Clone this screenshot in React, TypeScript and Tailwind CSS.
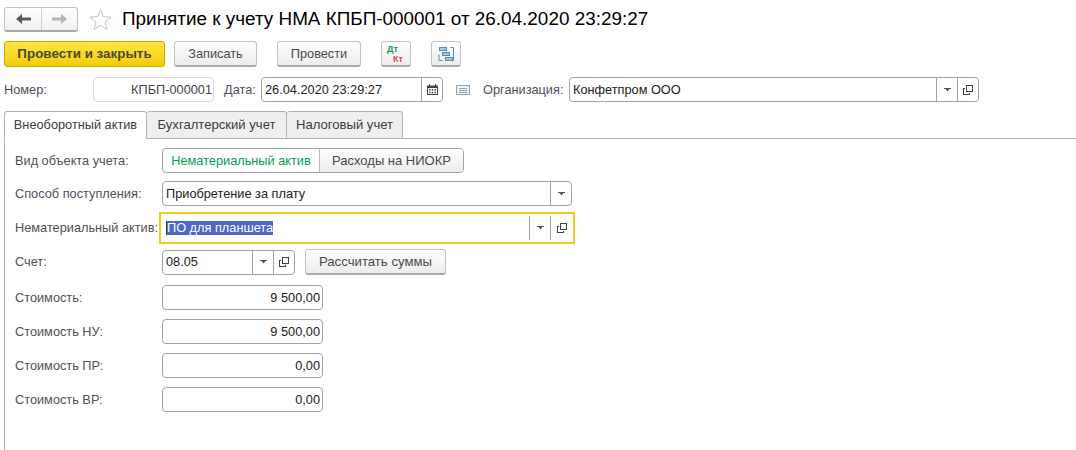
import type { ReactNode } from "react";

function DropArrow() {
  return (
    <svg width="7" height="4" viewBox="0 0 7 4" className="text-[#555]">
      <path d="M0 0h7v1H5.5L3.5 3.5 1.5 1H0z" fill="currentColor" />
    </svg>
  );
}

function OpenIcon() {
  return (
    <svg width="10" height="10" viewBox="0 0 10 10" fill="none" stroke="#444" strokeWidth="1" shapeRendering="crispEdges">
      <rect x="3.5" y="0.5" width="6" height="6" />
      <path d="M2 3.5H0.5V9.5H6V8" />
    </svg>
  );
}

function Field({ className = "", children, right = false }: { className?: string; children?: ReactNode; right?: boolean }) {
  return (
    <div
      className={`flex h-[25px] items-center rounded-[4px] border border-[#a3a3a3] bg-white text-[#222] ${right ? "justify-end pr-[2px]" : "pl-[3px]"} ${className}`}
    >
      {children}
    </div>
  );
}

function FieldBtn({ children, w = "w-[21px]" }: { children: ReactNode; w?: string }) {
  return <div className={`flex h-full shrink-0 items-center justify-center border-l border-[#a3a3a3] ${w}`}>{children}</div>;
}

function Btn({ className = "", children }: { className?: string; children: ReactNode }) {
  return (
    <div
      className={`flex h-[26px] items-center justify-center rounded-[3px] border border-b-2 border-[#c4c4c4] border-b-[#aaa] bg-gradient-to-b from-white to-[#ececec] text-[#4a4a4a] ${className}`}
    >
      {children}
    </div>
  );
}

function Row({ label, top, children }: { label: string; top: string; children: ReactNode }) {
  return (
    <div className={`flex items-center ${top}`}>
      <div className="w-[147px] shrink-0 whitespace-nowrap text-[#50505a]">{label}</div>
      {children}
    </div>
  );
}

function Tab({ active = false, className = "", children }: { active?: boolean; className?: string; children: ReactNode }) {
  return (
    <div
      className={`flex h-[28px] items-center rounded-t-[3px] border border-[#b4b4b4] text-[#3c3c3c] ${active ? "border-b-white bg-white" : "bg-[#efefef]"} ${className}`}
    >
      {children}
    </div>
  );
}

export default function App() {
  return (
    <div className="h-[450px] overflow-hidden bg-white pl-1 pt-[7px] text-[12.75px] leading-[14px] [font-family:'Liberation_Sans',Arial,sans-serif]">
      {/* title row */}
      <div className="flex h-[25px] items-center">
        <div className="flex h-[25px] w-[74px] items-center rounded-[3px] border border-b-2 border-[#c4c4c4] border-b-[#aaa] bg-gradient-to-b from-white to-[#f0f0f0]">
          <div className="flex h-full w-[37px] items-center justify-center border-r border-[#d0d0d0]">
            <svg width="15" height="10" viewBox="0 0 15 10">
              <path d="M0 5 6 0v3.5h9v3H6V10z" fill="#5a5a5a" />
            </svg>
          </div>
          <div className="flex h-full flex-1 items-center justify-center">
            <svg width="15" height="10" viewBox="0 0 15 10">
              <path d="M15 5 9 0v3.5H0v3h9V10z" fill="#b4b4b4" />
            </svg>
          </div>
        </div>
        <svg width="23" height="23" viewBox="0 0 23 23" fill="none" stroke="#c4c4c4" className="ml-[11px]">
          <path d="M11.5 1.5 14.3 8.7 22 9.1 16 14 18 21.5 11.5 17.3 5 21.5 7 14 1 9.1 8.7 8.7z" />
        </svg>
        <h1 className="mb-[2px] ml-[10px] whitespace-nowrap text-[18.9px] font-normal text-black">Принятие к учету НМА КПБП-000001 от 26.04.2020 23:29:27</h1>
      </div>

      {/* command bar */}
      <div className="mt-[9px] flex items-center">
        <div className="flex h-[26px] w-[161px] items-center justify-center rounded-[3px] border border-[#c9a800] bg-gradient-to-b from-[#ffe640] to-[#f3cd00] text-[13.4px] font-bold text-[#4f4a2a]">
          Провести и закрыть
        </div>
        <Btn className="ml-[9px] w-[83px]">Записать</Btn>
        <Btn className="ml-[20px] w-[84px]">Провести</Btn>
        <Btn className="ml-[20px] w-[30px]">
          <div className="relative h-[20px] w-[20px] text-[9px] font-bold leading-[10px]">
            <span className="absolute left-[1px] top-0 text-[#0a9a50]">Дт</span>
            <span className="absolute left-[7px] top-[10px] text-[#e8474a]">Кт</span>
          </div>
        </Btn>
        <Btn className="ml-[20px] w-[30px]">
          <svg width="16" height="16" viewBox="0 0 16 16" fill="#a9c6dd" stroke="#5a8db5">
            <path d="M12.5 1.5h3v13h-3M4.5 14.5h-3.5v-6" fill="none" />
            <rect x="1.5" y="1.5" width="7" height="3" />
            <rect x="4.5" y="6.5" width="7" height="3" />
            <rect x="7.5" y="11.5" width="7" height="3" />
          </svg>
        </Btn>
      </div>

      {/* number row */}
      <div className="mt-[10px] flex items-center">
        <div className="w-[89px] shrink-0 text-[#50505a]">Номер:</div>
        <Field className="w-[121px] justify-end !pr-[1px] border-[#dcdcdc] text-[#444]">КПБП-000001</Field>
        <div className="ml-[10px] w-[37px] text-[#50505a]">Дата:</div>
        <Field className="w-[182px] justify-between">
          <span>26.04.2020 23:29:27</span>
          <FieldBtn>
            <svg width="11" height="11" viewBox="0 0 11 11" fill="#444">
              <path d="M0 1.5h2V0h1v1.5h5V0h1v1.5h2V11H0zM1 4v6h9V4z" />
              <path d="M2 5h1.5v1.5H2zM4.7 5h1.5v1.5H4.7zM7.5 5H9v1.5H7.5zM2 7.8h1.5v1.5H2zM4.7 7.8h1.5v1.5H4.7zM7.5 7.8H9v1.5H7.5z" />
            </svg>
          </FieldBtn>
        </Field>
        <svg width="14" height="10" viewBox="0 0 14 10" fill="none" stroke="#8fa3b5" className="ml-[13px]" shapeRendering="crispEdges">
          <rect x="0.5" y="0.5" width="13" height="9" fill="#f2f5f8" />
          <path d="M3 3.5h8M3 5.5h8M3 7.5h8" />
        </svg>
        <div className="ml-[13px] w-[86px] whitespace-nowrap text-[#50505a]">Организация:</div>
        <Field className="w-[410px] justify-between">
          <span>Конфетпром ООО</span>
          <div className="flex h-full">
            <FieldBtn><DropArrow /></FieldBtn>
            <FieldBtn><OpenIcon /></FieldBtn>
          </div>
        </Field>
      </div>

      {/* tabs */}
      <div className="relative z-10 mt-[9px] flex">
        <Tab active className="w-[143px] justify-center">Внеоборотный актив</Tab>
        <Tab className="w-[140px] justify-center border-l-0 text-[13.1px]">Бухгалтерский учет</Tab>
        <Tab className="w-[116px] justify-center border-l-0 text-[13.1px]">Налоговый учет</Tab>
      </div>

      {/* tab body */}
      <div className="-mt-px h-[320px] border-l border-t border-[#b4b4b4] pl-[10px] pt-[9px]">
        <Row label="Вид объекта учета:" top="">
          <div className="flex h-[25px] w-[302px] overflow-hidden rounded-[4px] border border-[#a3a3a3]">
            <div className="flex w-[156px] items-center justify-center whitespace-nowrap text-[#0a9a5a]">Нематериальный актив</div>
            <div className="flex flex-1 items-center justify-center whitespace-nowrap border-l border-[#bbb] bg-gradient-to-b from-white to-[#ececec] text-[13px] text-[#4a4a4a]">
              Расходы на НИОКР
            </div>
          </div>
        </Row>
        <Row label="Способ поступления:" top="mt-[8px]">
          <Field className="w-[410px] justify-between">
            <span>Приобретение за плату</span>
            <FieldBtn><DropArrow /></FieldBtn>
          </Field>
        </Row>
        <Row label="Нематериальный актив:" top="mt-[6px]">
          <div className="-ml-[3px] flex h-[32px] w-[416px] items-center justify-between border-2 border-[#fbc91c] pl-[5px]">
            <span className="border-l border-[#333] bg-[#4f67c6] text-white">ПО для планшета</span>
            <div className="mr-[1px] flex h-[24px]">
              <FieldBtn><DropArrow /></FieldBtn>
              <FieldBtn w="w-[22px]"><OpenIcon /></FieldBtn>
            </div>
          </div>
        </Row>
        <Row label="Счет:" top="mt-[5px]">
          <Field className="w-[133px] justify-between">
            <span>08.05</span>
            <div className="flex h-full">
              <FieldBtn><DropArrow /></FieldBtn>
              <FieldBtn><OpenIcon /></FieldBtn>
            </div>
          </Field>
          <Btn className="ml-[10px] w-[141px] whitespace-nowrap text-[13.2px]">Рассчитать суммы</Btn>
        </Row>
        <Row label="Стоимость:" top="mt-[10px]">
          <Field right className="w-[161px]">9 500,00</Field>
        </Row>
        <Row label="Стоимость НУ:" top="mt-[9px]">
          <Field right className="w-[161px]">9 500,00</Field>
        </Row>
        <Row label="Стоимость ПР:" top="mt-[9px]">
          <Field right className="w-[161px]">0,00</Field>
        </Row>
        <Row label="Стоимость ВР:" top="mt-[9px]">
          <Field right className="w-[161px]">0,00</Field>
        </Row>
      </div>
    </div>
  );
}
